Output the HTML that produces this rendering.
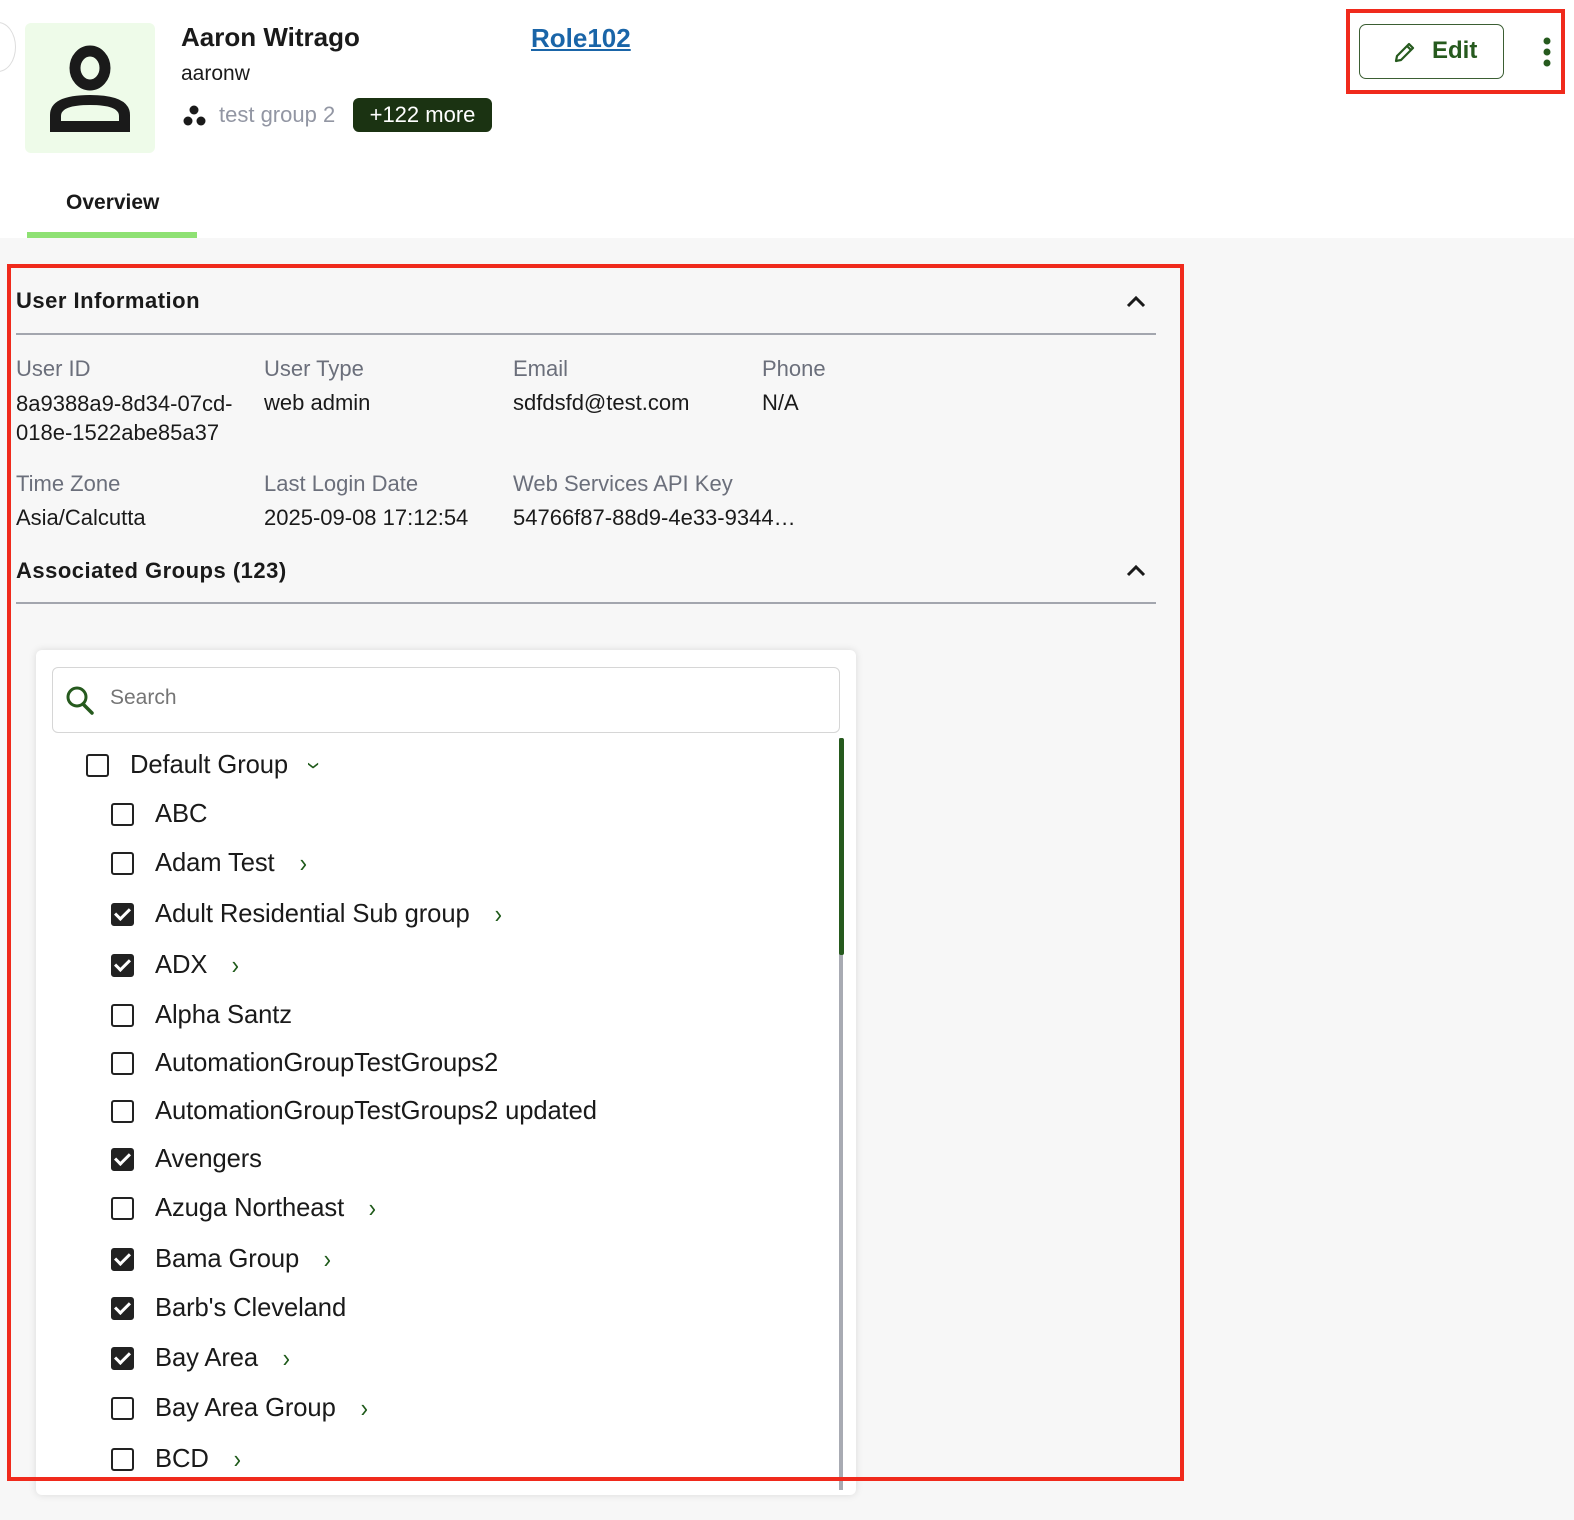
<!DOCTYPE html>
<html><head><meta charset="utf-8"><style>
*{box-sizing:border-box;margin:0;padding:0}
body{width:1574px;height:1520px;background:#f7f7f7;font-family:"Liberation Sans",Arial,sans-serif;position:relative;overflow:hidden;color:#1a1a1a}
.a{position:absolute;white-space:nowrap}
.top{position:absolute;left:0;top:0;width:1574px;height:238px;background:#fff}
.lbl{font-size:22px;color:#6b6f7b}
.val{font-size:22px;color:#1a1a1a}
.row{position:absolute;display:flex;align-items:center;font-size:25.6px;color:#1a1a1a;height:30px;letter-spacing:-0.1px}
.cb{width:23px;height:23px;border:2.5px solid #222;border-radius:3px;margin-right:21px;flex:none;background:#fff}
.cb.on{background:#222;position:relative}
.cb.on:after{content:"";position:absolute;left:5px;top:0px;width:6px;height:12px;border:solid #fff;border-width:0 3px 3px 0;transform:rotate(45deg)}
.chev{color:#1f5a1a;font-size:26px;margin-left:24px;transform:scaleX(.85)}
</style></head><body>
<div class="top"></div>
<div class="a" style="left:-20px;top:22px;width:36px;height:50px;border:1px solid #ddd;border-radius:50%;background:#fff"></div>
<div class="a" style="left:25px;top:23px;width:130px;height:130px;background:#eefbe9;border-radius:6px"></div>
<svg class="a" style="left:45px;top:45px" width="90" height="88" viewBox="0 0 90 88"><ellipse cx="45" cy="23" rx="15" ry="17" fill="none" stroke="#1a1a1a" stroke-width="11"/><path d="M5 87 V70 Q5 50 45 50 Q85 50 85 70 V87 Z M16 76 H74 V71 Q74 60 45 60 Q16 60 16 71 Z" fill="#1a1a1a" fill-rule="evenodd"/></svg>
<div class="a" style="left:181px;top:22px;font-size:26px;font-weight:bold">Aaron Witrago</div>
<div class="a" style="left:181px;top:62px;font-size:21px">aaronw</div>
<svg class="a" style="left:182px;top:105px" width="26" height="22"><circle cx="12" cy="5" r="4.5" fill="#1a1a1a"/><circle cx="6" cy="16" r="4.5" fill="#1a1a1a"/><circle cx="19" cy="16" r="4.5" fill="#1a1a1a"/></svg>
<div class="a" style="left:219px;top:102px;font-size:22px;color:#9296a3">test group 2</div>
<div class="a" style="left:353px;top:98px;width:139px;height:34px;background:#1b3312;border-radius:6px;color:#fff;font-size:22px;line-height:34px;text-align:center">+122 more</div>
<div class="a" style="left:531px;top:23px;font-size:26px;font-weight:bold;color:#1a65a8;text-decoration:underline">Role102</div>
<div class="a" style="left:66px;top:191px;font-size:21px;font-weight:bold">Overview</div>
<div class="a" style="left:27px;top:232px;width:170px;height:6px;background:#8ee173"></div>
<div class="a" style="left:1359px;top:24px;width:145px;height:55px;border:1px solid #3b5e33;border-radius:7px;background:#fff"></div>
<svg class="a" style="left:1393px;top:40px" width="24" height="24" viewBox="0 0 24 24"><path d="M3 21 L4 16 L16 4 L20 8 L8 20 Z M14 6 L18 10" fill="none" stroke="#265a1e" stroke-width="2.2" stroke-linejoin="round"/></svg>
<div class="a" style="left:1432px;top:37px;font-size:24px;font-weight:bold;color:#265a1e">Edit</div>
<svg class="a" style="left:1540px;top:36px" width="14" height="32"><circle cx="7" cy="5" r="3.5" fill="#265a1e"/><circle cx="7" cy="16" r="3.5" fill="#265a1e"/><circle cx="7" cy="27" r="3.5" fill="#265a1e"/></svg>
<div class="a" style="left:1346px;top:9px;width:219px;height:85px;border:4px solid #f02a1c"></div>

<div class="a" style="left:16px;top:288px;font-size:22px;font-weight:bold;letter-spacing:.5px">User Information</div>
<svg class="a" style="left:1126px;top:294px" width="20" height="14"><path d="M2 12 L10 4 L18 12" fill="none" stroke="#1a1a1a" stroke-width="3"/></svg>
<div class="a" style="left:16px;top:333px;width:1140px;height:2px;background:#a3a6ae"></div>
<div class="a lbl" style="left:16px;top:356px">User ID</div>
<div class="a lbl" style="left:264px;top:356px">User Type</div>
<div class="a lbl" style="left:513px;top:356px">Email</div>
<div class="a lbl" style="left:762px;top:356px">Phone</div>
<div class="a val" style="left:16px;top:389px;line-height:29px">8a9388a9-8d34-07cd-<br>018e-1522abe85a37</div>
<div class="a val" style="left:264px;top:390px">web admin</div>
<div class="a val" style="left:513px;top:390px">sdfdsfd@test.com</div>
<div class="a val" style="left:762px;top:390px">N/A</div>
<div class="a lbl" style="left:16px;top:471px">Time Zone</div>
<div class="a lbl" style="left:264px;top:471px">Last Login Date</div>
<div class="a lbl" style="left:513px;top:471px">Web Services API Key</div>
<div class="a val" style="left:16px;top:505px">Asia/Calcutta</div>
<div class="a val" style="left:264px;top:505px">2025-09-08 17:12:54</div>
<div class="a val" style="left:513px;top:505px">54766f87-88d9-4e33-9344…</div>
<div class="a" style="left:16px;top:558px;font-size:22px;font-weight:bold;letter-spacing:.5px">Associated Groups (123)</div>
<svg class="a" style="left:1126px;top:563px" width="20" height="14"><path d="M2 12 L10 4 L18 12" fill="none" stroke="#1a1a1a" stroke-width="3"/></svg>
<div class="a" style="left:16px;top:602px;width:1140px;height:2px;background:#a3a6ae"></div>

<div class="a" style="left:36px;top:650px;width:820px;height:845px;background:#fff;box-shadow:0 0 8px rgba(0,0,0,.12);border-radius:6px"></div>
<div class="a" style="left:52px;top:667px;width:788px;height:66px;border:1px solid #d6d6d6;border-radius:6px;background:#fff"></div>
<svg class="a" style="left:64px;top:684px" width="32" height="32"><circle cx="13" cy="13" r="9" fill="none" stroke="#265a1e" stroke-width="3"/><path d="M19 20 L28 29" stroke="#265a1e" stroke-width="3.5" stroke-linecap="round"/></svg>
<div class="a" style="left:110px;top:686px;font-size:21px;color:#757575">Search</div>
<div class="a" style="left:839px;top:738px;width:4px;height:752px;background:#a8abb3"></div>
<div class="a" style="left:839px;top:738px;width:5px;height:217px;background:#265a1e;border-radius:2px"></div>

<div class="row" style="left:86px;top:750px"><span class="cb"></span>Default Group<span class="chev" style="transform:rotate(90deg) scaleX(.85);margin-left:22px">›</span></div>
<div class="row" style="left:111px;top:799px"><span class="cb"></span>ABC</div>
<div class="row" style="left:111px;top:848px"><span class="cb"></span>Adam Test<span class="chev">›</span></div>
<div class="row" style="left:111px;top:899px"><span class="cb on"></span>Adult Residential Sub group<span class="chev">›</span></div>
<div class="row" style="left:111px;top:950px"><span class="cb on"></span>ADX<span class="chev">›</span></div>
<div class="row" style="left:111px;top:1000px"><span class="cb"></span>Alpha Santz</div>
<div class="row" style="left:111px;top:1048px"><span class="cb"></span>AutomationGroupTestGroups2</div>
<div class="row" style="left:111px;top:1096px"><span class="cb"></span>AutomationGroupTestGroups2 updated</div>
<div class="row" style="left:111px;top:1144px"><span class="cb on"></span>Avengers</div>
<div class="row" style="left:111px;top:1193px"><span class="cb"></span>Azuga Northeast<span class="chev">›</span></div>
<div class="row" style="left:111px;top:1244px"><span class="cb on"></span>Bama Group<span class="chev">›</span></div>
<div class="row" style="left:111px;top:1293px"><span class="cb on"></span>Barb's Cleveland</div>
<div class="row" style="left:111px;top:1343px"><span class="cb on"></span>Bay Area<span class="chev">›</span></div>
<div class="row" style="left:111px;top:1393px"><span class="cb"></span>Bay Area Group<span class="chev">›</span></div>
<div class="row" style="left:111px;top:1444px"><span class="cb"></span>BCD<span class="chev">›</span></div>

<div class="a" style="left:7px;top:264px;width:1177px;height:1217px;border:4px solid #f02a1c"></div>
</body></html>
